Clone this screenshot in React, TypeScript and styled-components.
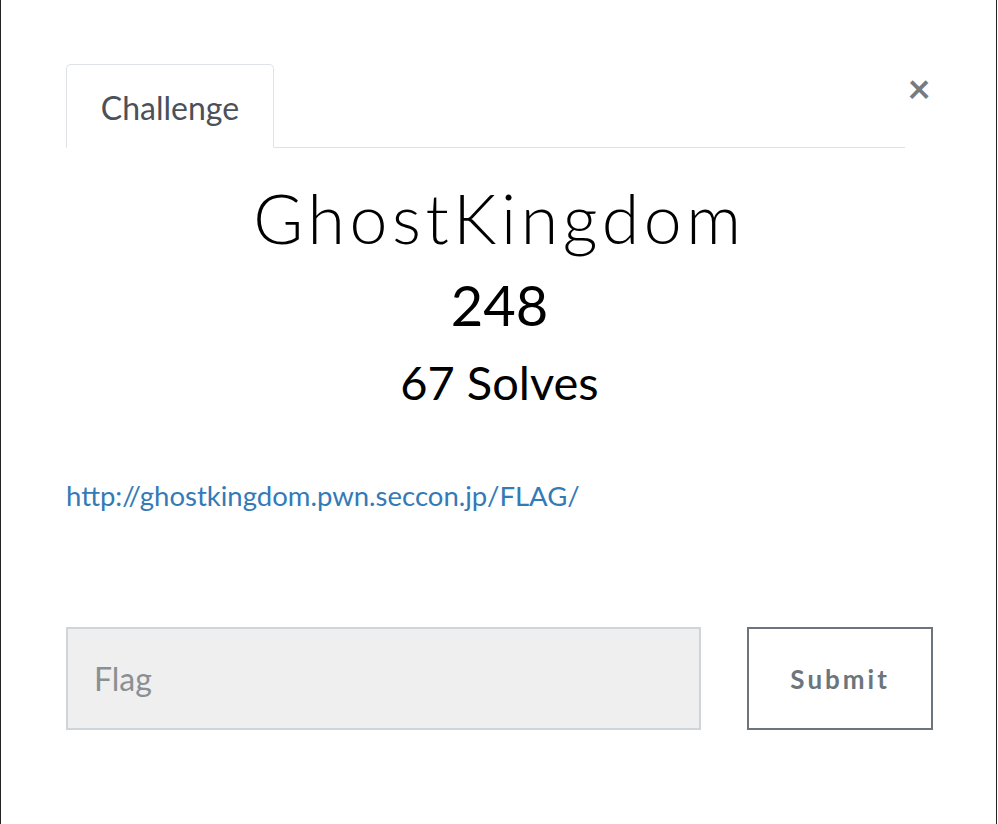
import React from "react";
import styled, { createGlobalStyle } from "styled-components";

const Global = createGlobalStyle`
  html, body { margin: 0; padding: 0; background: #fff; }
  body { font-family: Lato, "Open Sans", sans-serif; }
`;

const Modal = styled.div`
  box-sizing: border-box;
  width: 997px;
  height: 824px;
  border-left: 1px solid #222;
  border-right: 1px solid #222;
  padding: 64px 63px 0 65px;
  display: flex;
  flex-direction: column;
`;

const Header = styled.div`
  display: flex;
  align-items: flex-start;
`;

const Nav = styled.div`
  flex: 1;
  display: flex;
  border-bottom: 1px solid #dee2e6;
`;

const Tab = styled.div`
  box-sizing: border-box;
  width: 208px;
  height: 84px;
  margin-bottom: -1px;
  border: 1px solid #dee2e6;
  border-bottom-color: #fff;
  border-radius: 5px 5px 0 0;
  display: flex;
  align-items: center;
  justify-content: center;
  font-size: 32px;
  color: #4a515a;
  padding-top: 2px;
`;

const Close = styled.button`
  width: 28px;
  border: 0;
  background: none;
  padding: 0;
  margin-top: 4px;
  font-family: Lato, sans-serif;
  font-size: 40px;
  font-weight: 700;
  line-height: 40px;
  color: #7a7a7a;
  text-align: center;
`;

const Body = styled.div`
  display: flex;
  flex-direction: column;
  align-items: center;
`;

const Title = styled.h2`
  margin: 30px 0 0;
  font-family: Lato, sans-serif;
  font-weight: 300;
  font-size: 68px;
  letter-spacing: 4.6px;
  line-height: 80px;
  color: #000;
`;

const Value = styled.h3`
  margin: 14px 0 0;
  font-weight: 400;
  font-size: 56px;
  line-height: 66px;
  color: #000;
`;

const Solves = styled.h4`
  margin: 16px 0 0;
  font-weight: 400;
  font-size: 47px;
  line-height: 56px;
  color: #000;
`;

const Description = styled.div`
  align-self: stretch;
  margin-top: 69px;
  font-size: 27.5px;
  line-height: 34px;
`;

const Link = styled.a`
  color: #337ab7;
  text-decoration: none;
`;

const Form = styled.form`
  display: flex;
  gap: 46px;
  margin-top: 114px;
`;

const Input = styled.input`
  box-sizing: border-box;
  width: 636px;
  height: 103px;
  background: #efefef;
  border: 2px solid #d0d5da;
  padding: 0 26px;
  font-family: Lato, sans-serif;
  font-size: 32px;
  color: #333;
  outline: none;
  &::placeholder { color: #8a8f94; }
`;

const Submit = styled.button`
  box-sizing: border-box;
  width: 186px;
  height: 103px;
  background: #fff;
  border: 2px solid #6c757d;
  font-family: Lato, sans-serif;
  font-weight: 700;
  font-size: 26px;
  letter-spacing: 3px;
  color: #6c757d;
`;

export default function App() {
  return (
    <>
      <Global />
      <Modal>
        <Header>
          <Nav>
            <Tab>Challenge</Tab>
          </Nav>
          <Close aria-label="Close">×</Close>
        </Header>
        <Body>
          <Title>GhostKingdom</Title>
          <Value>248</Value>
          <Solves>67 Solves</Solves>
          <Description>
            <Link href="#">http://ghostkingdom.pwn.seccon.jp/FLAG/</Link>
          </Description>
        </Body>
        <Form onSubmit={(e) => e.preventDefault()}>
          <Input placeholder="Flag" />
          <Submit type="submit">Submit</Submit>
        </Form>
      </Modal>
    </>
  );
}
